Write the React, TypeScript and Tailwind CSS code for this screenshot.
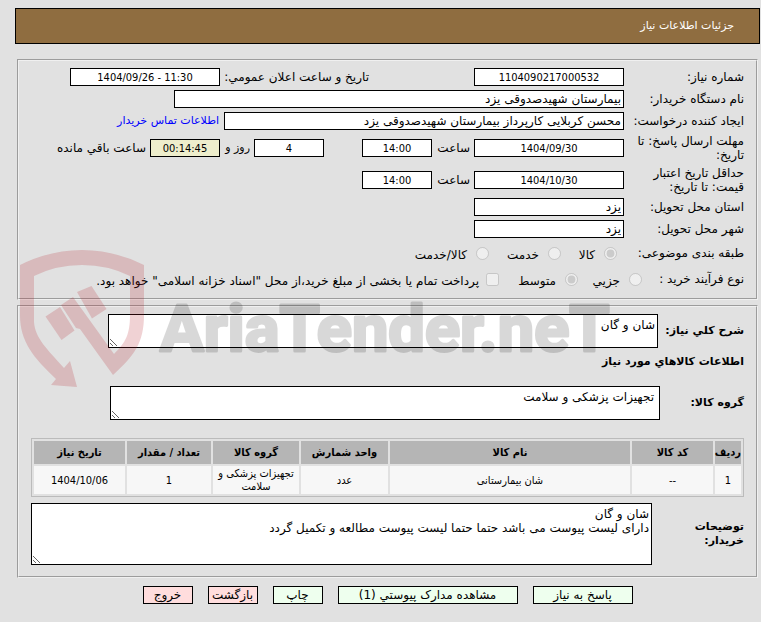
import type { ReactNode } from "react";

const small = "font-['DejaVu_Sans_Condensed','DejaVu_Sans',sans-serif] text-[11px]";
const box = "h-[18px] border border-black px-[2px] leading-4 outline-none shrink-0";
const area = "block border border-black bg-white py-[3px] leading-[14px] outline-none resize shrink-0";
const group = "border-2 border-[#f0f0f0] [border-style:groove] min-w-0 px-3";

function Row({ label, id, height, children }: { label: string; id?: string; height: string; children: ReactNode }) {
  return (
    <div className={`flex items-center ${height}`}>
      <label htmlFor={id} className="w-[120px] shrink-0 pl-1 leading-[14px]">{label}</label>
      {children}
    </div>
  );
}

function Field({ id, value, width, label, tone = "bg-white" }: { id?: string; value: string; width: string; label?: string; tone?: string }) {
  return <input id={id} aria-label={label} readOnly dir="ltr" value={value} className={`${box} ${small} ${width} ${tone} text-center`} />;
}

function TextField({ id, value, width }: { id: string; value: string; width: string }) {
  return <input id={id} readOnly dir="rtl" value={value} className={`${box} ${width} bg-white`} />;
}

function Choice({ type, name, text, checked = false, className = "" }: { type: "radio" | "checkbox"; name: string; text: string; checked?: boolean; className?: string }) {
  return (
    <label className={`flex shrink-0 items-start pt-[3px] whitespace-nowrap ${className}`}>
      <input type={type} name={name} defaultChecked={checked} disabled className="size-[13px] shrink-0" />
      <span className="pt-px leading-[14px]">{text}</span>
    </label>
  );
}

const columns = [
  { title: "ردیف", value: "1", width: "w-[26px]" },
  { title: "کد کالا", value: "--", width: "w-[81px]" },
  { title: "نام کالا", value: "شان بیمارستانی", width: "" },
  { title: "واحد شمارش", value: "عدد", width: "w-[87px]" },
  { title: "گروه کالا", value: "تجهیزات پزشکی و سلامت", width: "w-[86px]" },
  { title: "تعداد / مقدار", value: "1", width: "w-[84px]" },
  { title: "تاریخ نیاز", value: "1404/10/06", width: "w-[91px]" },
];

const actions = [
  { text: "پاسخ به نیاز", style: "w-[100px] bg-[#eeffee]" },
  { text: "مشاهده مدارک پیوستي (1)", style: "w-[180px] bg-[#eeffee]" },
  { text: "چاپ", style: "w-[50px] bg-[#eeffee]" },
  { text: "بازگشت", style: "w-[50px] bg-[#ffdddd]" },
  { text: "خروج", style: "w-[50px] bg-[#ffdddd]" },
];

function Watermark() {
  return (
    <svg aria-hidden="true" className="pointer-events-none absolute top-[245px] left-[15px]" width="600" height="145" viewBox="15 245 600 145">
      <g fill="#b41e28" fillOpacity="0.2">
        <path d="M20 265Q50 250 82 250Q114 250 144 265V315C144 343 134 356 113 375L80 329L76 328L61 305L73 297L91 322L114 354C126 342 130 334 130 315V276Q108 265 82 265Q56 265 34 276V322C35 338 47 349 64 368L70 361L77 387L51 385L56 379C34 358 20 342 20 315Z" />
        <path d="M45.5 316.5L60 307L74.5 330.5L61.5 340Z" />
        <path d="M77 292L91.5 286L106.5 309L92 318.5Z" />
      </g>
      <text x="160" y="351" direction="ltr" textAnchor="start" fill="#000000" stroke="#000000" strokeWidth="3" strokeLinejoin="round" opacity="0.15" fontSize="65" fontWeight="700" fontFamily="Roboto, sans-serif">AriaTender.neT</text>
    </svg>
  );
}

export default function App() {
  return (
    <div dir="rtl" className="relative min-h-screen bg-[#e1e1e1] pt-2 pr-px pb-[18px] pl-[15px] font-['DejaVu_Sans',sans-serif] text-[12px] text-black">
      <header className="flex h-9 items-center border border-black bg-[#8f6d40] pr-[25px] text-[11px] text-white">
        <h1>جزئیات اطلاعات نیاز</h1>
      </header>

      <main className="mt-[15px] mr-[2px] ml-[2px]">
        <section className={`${group} pt-[5px] pb-[7px]`}>
          <Row label="شماره نیاز:" id="number" height="h-[22px]">
            <Field id="number" value="1104090217000532" width="w-[150px]" />
            <label htmlFor="announced" className="mr-[105px] w-[149px] shrink-0 whitespace-nowrap">تاریخ و ساعت اعلان عمومي:</label>
            <Field id="announced" value="1404/09/26 - 11:30" width="w-[150px]" />
          </Row>
          <Row label="نام دستگاه خریدار:" id="buyer" height="h-[22px]">
            <TextField id="buyer" value="بیمارستان شهیدصدوقی یزد" width="w-[450px]" />
          </Row>
          <Row label="ایجاد کننده درخواست:" id="creator" height="h-[22px]">
            <TextField id="creator" value="محسن کربلایی کارپرداز بیمارستان شهیدصدوقی یزد" width="w-[400px]" />
            <a href="#contact" className="mr-[5px] text-[11px] whitespace-nowrap text-[#0000ff]">اطلاعات تماس خریدار</a>
          </Row>
          <Row label="مهلت ارسال پاسخ: تا تاریخ:" id="deadline" height="h-8">
            <Field id="deadline" value="1404/09/30" width="w-[150px]" />
            <label htmlFor="deadline-hour" className="w-[42px] shrink-0 pr-1">ساعت</label>
            <Field id="deadline-hour" value="14:00" width="w-[70px]" />
            <Field label="روز" value="4" width="w-[70px]" tone="mr-[38px] bg-white" />
            <span className="w-[34px] shrink-0 pr-1 text-[11px] whitespace-nowrap">روز و</span>
            <Field label="ساعت باقي مانده" value="00:14:45" width="w-[70px]" tone="bg-[#eeeecc]" />
            <span className="pr-1 whitespace-nowrap">ساعت باقي مانده</span>
          </Row>
          <Row label="حداقل تاریخ اعتبار قیمت: تا تاریخ:" id="valid" height="h-8">
            <Field id="valid" value="1404/10/30" width="w-[150px]" />
            <label htmlFor="valid-hour" className="w-[42px] shrink-0 pr-1">ساعت</label>
            <Field id="valid-hour" value="14:00" width="w-[70px]" />
          </Row>
          <Row label="استان محل تحویل:" id="province" height="h-[22px]">
            <TextField id="province" value="یزد" width="w-[150px]" />
          </Row>
          <Row label="شهر محل تحویل:" id="city" height="h-[22px]">
            <TextField id="city" value="یزد" width="w-[150px]" />
          </Row>
          <Row label="طبقه بندی موضوعی:" height="h-[26px]">
            <Choice type="radio" name="category" text="کالا" checked className="mr-[7px] w-[56px] gap-[9px]" />
            <Choice type="radio" name="category" text="خدمت" className="w-[72px] gap-[9px]" />
            <Choice type="radio" name="category" text="کالا/خدمت" className="gap-[9px]" />
          </Row>
          <Row label="نوع فرآیند خرید :" height="h-[25px]">
            <Choice type="radio" name="process" text="جزیي" className="-mr-[18px] w-[64px] gap-[9px]" />
            <Choice type="radio" name="process" text="متوسط" checked className="w-[79px] gap-[9px]" />
            <Choice type="checkbox" name="treasury" text={'پرداخت تمام یا بخشی از مبلغ خرید،از محل "اسناد خزانه اسلامی" خواهد بود.'} className="gap-[7px]" />
          </Row>
        </section>

        <section className={`${group} mt-[5px] pt-[7px] pb-[11px]`}>
          <div className="flex items-center">
            <label htmlFor="summary" className="w-[86px] shrink-0 text-[11px] font-bold whitespace-nowrap">شرح کلي نیاز:</label>
            <textarea id="summary" readOnly defaultValue="شان و گان" className={`${area} h-[34px] w-[550px] px-[2px]`} />
          </div>
          <h2 className="mt-[7px] text-[11px] leading-[14px] font-bold">اطلاعات کالاهاي مورد نیاز</h2>
          <div className="mt-[17px] flex items-center">
            <label htmlFor="goods" className="w-[84px] shrink-0 text-[11px] font-bold">گروه کالا:</label>
            <textarea id="goods" readOnly defaultValue="تجهیزات پزشکی و سلامت" className={`${area} h-[34px] w-[550px] px-[5px]`} />
          </div>
          <table className={`${small} mt-[18px] w-full table-fixed border-separate border-spacing-[2px] border border-[#bbbbbb] text-center leading-[13px]`}>
            <thead>
              <tr className="h-[23px] bg-[#b5b5b5]">
                {columns.map((c) => <th key={c.title} className={`${c.width} p-0 font-bold whitespace-nowrap`}>{c.title}</th>)}
              </tr>
            </thead>
            <tbody>
              <tr className="h-7 bg-[#f7f7f7]">
                {columns.map((c) => <td key={c.title} className="p-0">{c.value}</td>)}
              </tr>
            </tbody>
          </table>
          <div className="mt-[6px] flex items-center">
            <label htmlFor="notes" className="w-[92px] shrink-0 pl-6 text-[11px] leading-[14px] font-bold">توضیحات خریدار:</label>
            <textarea id="notes" readOnly defaultValue={"شان و گان\nدارای لیست پیوست می باشد حتما حتما لیست پیوست مطالعه و تکمیل گردد"} className={`${area} h-[62px] w-[621px] px-[2px]`} />
          </div>
        </section>
      </main>

      <footer className="mt-2 flex justify-center gap-[15px]">
        {actions.map((a) => (
          <button key={a.text} type="button" className={`h-[18px] border border-black leading-4 whitespace-nowrap ${a.style}`}>{a.text}</button>
        ))}
      </footer>

      <Watermark />
    </div>
  );
}
